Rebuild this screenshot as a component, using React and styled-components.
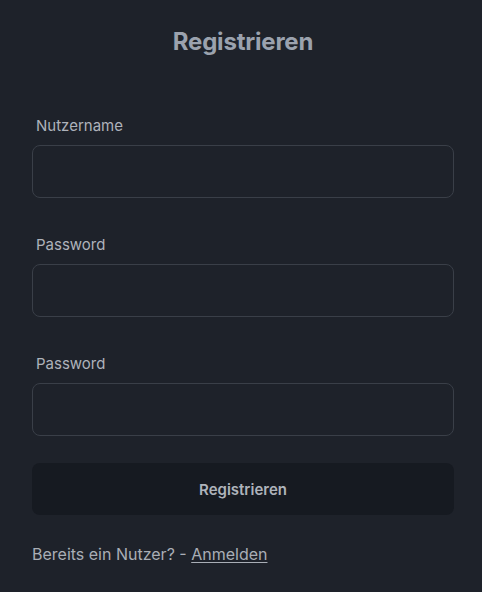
import styled, { createGlobalStyle } from "styled-components"

const GlobalStyle = createGlobalStyle`
    html, body {
        margin: 0;
        padding: 0;
        background-color: #1e222a;
        font-family: Inter, "Noto Sans", sans-serif;
    }
`

const Page = styled.div`
    width: 482px;
    height: 592px;
    box-sizing: border-box;
    padding: 26px 28px 0 32px;
    display: flex;
    flex-direction: column;
    background-color: #1e222a;
`

const Title = styled.h1`
    margin: 0;
    text-align: center;
    font-size: 24px;
    line-height: 32px;
    font-weight: 700;
    color: #9ba2ae;
    letter-spacing: -0.2px;
`

const Form = styled.form`
    display: flex;
    flex-direction: column;
    margin-top: 57px;
`

const Field = styled.div`
    display: flex;
    flex-direction: column;
    gap: 8px;
    margin-bottom: 36px;

    &:last-of-type {
        margin-bottom: 27px;
    }
`

const Label = styled.label`
    padding-left: 4px;
    font-size: 15px;
    line-height: 22px;
    color: #aeb3bb;
`

const Input = styled.input`
    height: 53px;
    box-sizing: border-box;
    border: 1px solid #3a3f48;
    border-radius: 8px;
    background-color: #1e222a;
    color: #d1d5db;
    font-family: inherit;
    font-size: 15px;
    padding: 0 14px;
    outline: none;
`

const Button = styled.button`
    height: 52px;
    border: none;
    border-radius: 8px;
    background-color: #161a21;
    color: #aeb3bb;
    font-family: inherit;
    font-size: 15px;
    font-weight: 600;
    cursor: pointer;
`

const Footer = styled.p`
    margin: 27px 0 0;
    font-size: 16px;
    line-height: 24px;
    color: #a9aeb6;

    & a {
        color: #a9aeb6;
        text-decoration: underline;
        text-underline-offset: 2px;
    }
`

const App = () => {
    return (
        <>
            <GlobalStyle />
            <Page>
                <Title>Registrieren</Title>
                <Form onSubmit={(e) => e.preventDefault()}>
                    <Field>
                        <Label htmlFor="name">Nutzername</Label>
                        <Input id="name" type="text" />
                    </Field>
                    <Field>
                        <Label htmlFor="password">Password</Label>
                        <Input id="password" type="password" />
                    </Field>
                    <Field>
                        <Label htmlFor="password2">Password</Label>
                        <Input id="password2" type="password" />
                    </Field>
                    <Button type="submit">Registrieren</Button>
                </Form>
                <Footer>
                    Bereits ein Nutzer? - <a href="#">Anmelden</a>
                </Footer>
            </Page>
        </>
    )
}

export default App
